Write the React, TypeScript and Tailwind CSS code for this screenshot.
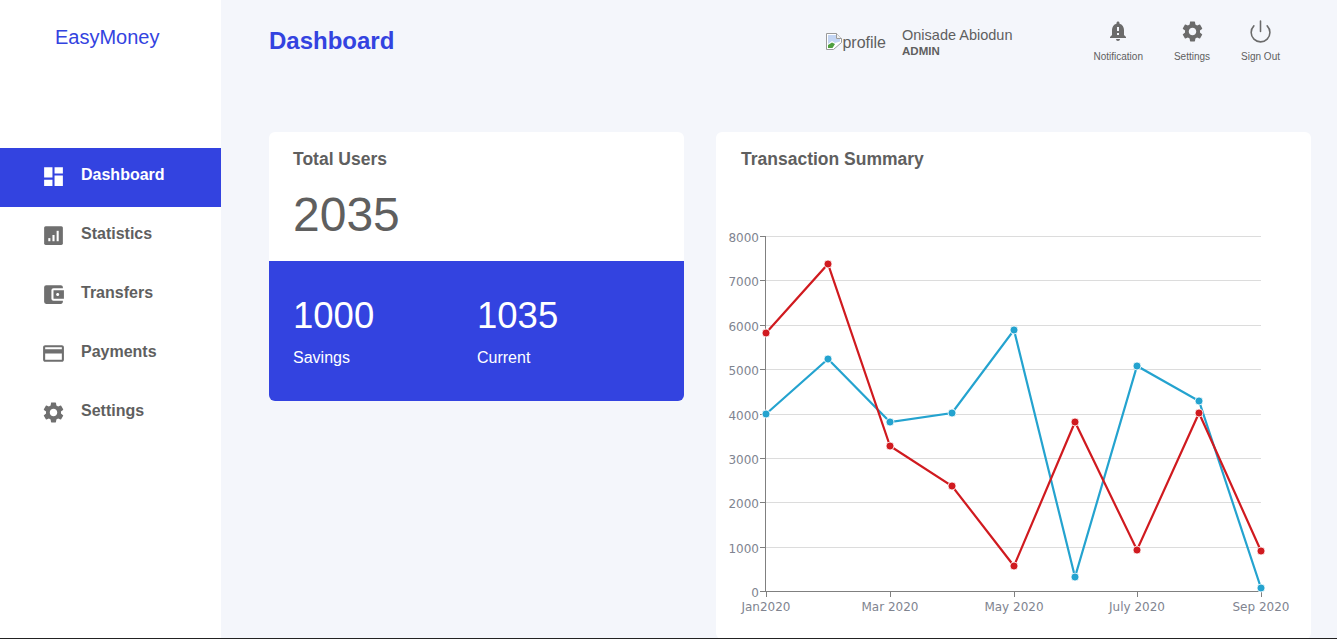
import React from 'react';
import {
  MdDashboard,
  MdAccountBalanceWallet,
  MdCreditCard,
  MdSettings,
  MdNotificationImportant,
} from 'react-icons/md';
import { Power } from 'lucide-react';

const StatsIcon = ({ size, className }: { size: number; className?: string }) => (
  <svg width={size} height={size} viewBox="0 0 24 24" className={className}>
    <rect x={3} y={3} width={18} height={18} rx={1.5} fill="currentColor" />
    <rect x={7} y={14.5} width={2} height={3} fill="#ffffff" />
    <rect x={11} y={11.5} width={2} height={6} fill="#ffffff" />
    <rect x={15} y={7.5} width={2} height={10} fill="#ffffff" />
  </svg>
);

const navItems = [
  { label: 'Dashboard', icon: MdDashboard, active: true },
  { label: 'Statistics', icon: StatsIcon, active: false },
  { label: 'Transfers', icon: MdAccountBalanceWallet, active: false },
  { label: 'Payments', icon: MdCreditCard, active: false },
  { label: 'Settings', icon: MdSettings, active: false },
];

const xs = [766, 828, 890, 952, 1014, 1075, 1137, 1199, 1261];
const red = [333, 264, 446, 486, 566, 422, 550, 413, 551];
const blue = [414, 359, 422, 413, 330, 577, 366, 401, 588];
const yTicks = [
  { label: '8000', y: 236.5 },
  { label: '7000', y: 280.5 },
  { label: '6000', y: 325.5 },
  { label: '5000', y: 369.5 },
  { label: '4000', y: 414.5 },
  { label: '3000', y: 458.5 },
  { label: '2000', y: 502.5 },
  { label: '1000', y: 547.5 },
  { label: '0', y: 591.5 },
];
const xTicks = [
  { label: 'Jan2020', x: 766 },
  { label: 'Mar 2020', x: 890 },
  { label: 'May 2020', x: 1014 },
  { label: 'July 2020', x: 1137 },
  { label: 'Sep 2020', x: 1261 },
];

// chart card starts at page x 716, y 132
const ox = 716;
const oy = 132;

const Series = ({ values, color }: { values: number[]; color: string }) => (
  <g>
    <polyline
      points={values.map((v, i) => `${xs[i] - ox},${v - oy}`).join(' ')}
      fill="none"
      stroke={color}
      strokeWidth={2.2}
    />
    {values.map((v, i) => (
      <circle key={i} cx={xs[i] - ox} cy={v - oy} r={4} fill={color} stroke="#ffffff" strokeWidth={0.8} />
    ))}
  </g>
);

const Chart = () => (
  <svg width={595} height={506} className="block absolute left-0 top-0" style={{ fontFamily: '"DejaVu Sans", sans-serif' }}>
    {yTicks.map((t) => (
      <g key={t.label}>
        {t.label !== '0' && <line x1={766 - ox} x2={1261 - ox} y1={t.y - oy} y2={t.y - oy} stroke="#dcdcdc" strokeWidth={1} />}
        <line x1={760 - ox} x2={766 - ox} y1={t.y - oy} y2={t.y - oy} stroke="#808080" strokeWidth={1} />
        <text x={759 - ox} y={t.y - oy + 5} textAnchor="end" fontSize={12} fill="#808490">
          {t.label}
        </text>
      </g>
    ))}
    <line x1={765.5 - ox} x2={765.5 - ox} y1={236 - oy} y2={592 - oy} stroke="#808080" strokeWidth={1} />
    <line x1={765 - ox} x2={1261 - ox} y1={591.5 - oy} y2={591.5 - oy} stroke="#808080" strokeWidth={1} />
    {xTicks.map((t) => (
      <g key={t.label}>
        <line x1={t.x - ox + 0.5} x2={t.x - ox + 0.5} y1={592 - oy} y2={597 - oy} stroke="#808080" strokeWidth={1} />
        <text x={t.x - ox} y={611 - oy} textAnchor="middle" fontSize={12} fill="#808490">
          {t.label}
        </text>
      </g>
    ))}
    <Series values={blue} color="#24a3cf" />
    <Series values={red} color="#d01a1f" />
  </svg>
);

const BrokenImage = () => (
  <svg width={16} height={17} viewBox="0 0 16 17" className="shrink-0 mb-[2px]">
    <path d="M0.5 0.5H10.5L15.5 5.5V9.5L7.5 16.5H0.5Z" fill="#ffffff" stroke="#9a9a9a" />
    <path d="M2 2H10V6H14V8.5L9 10L6 8L2 11Z" fill="#c3d5f3" />
    <path d="M2 15V12L6 9.5L9 11L6.5 15Z" fill="#4f9f3f" />
    <path d="M10.5 0.5V5.5H15.5" fill="#f0f0f0" stroke="#9a9a9a" />
  </svg>
);

const HeaderAction = ({ label, children }: { label: string; children: React.ReactNode }) => (
  <div className="flex flex-col items-center">
    <div className="h-[26px] flex items-center justify-center text-[#6b6b6b]">{children}</div>
    <span className="mt-[6px] text-[10px] leading-[14px] text-[#5f5f5f] whitespace-nowrap">{label}</span>
  </div>
);

export default function App() {
  return (
    <div
      className="h-[639px] w-full overflow-hidden flex border-b border-[#222222] bg-[#f4f6fb] text-[#5f5f5f]"
      style={{ fontFamily: '"Liberation Sans", Arial, sans-serif' }}
    >
      <aside className="w-[221px] shrink-0 bg-white">
        <div className="h-[148px] pt-[24px] pl-[55px] text-[20px] leading-[26px] text-[#3343e0]">EasyMoney</div>
        <nav className="flex flex-col">
          {navItems.map(({ label, icon: Icon, active }) => (
            <div
              key={label}
              className={`h-[59px] flex items-center pl-[41px] gap-[15px] text-[16px] font-bold ${
                active ? 'bg-[#3343e0] text-white' : 'text-[#5f5f5f]'
              }`}
            >
              <Icon size={25} className={`mb-[3px] ${active ? 'text-white' : 'text-[#6f6f6f]'}`} />
              <span className="leading-[20px] mb-[5px]">{label}</span>
            </div>
          ))}
        </nav>
      </aside>

      <main className="flex-1 min-w-0 pl-[48px] pr-[26px]">
        <header className="h-[132px] flex items-start">
          <h1 className="mt-[25px] text-[24px] leading-[32px] font-bold text-[#3343e0]">Dashboard</h1>
          <div className="ml-auto mt-[27px] flex items-start">
            <div className="flex items-end h-[24px] mt-[1px]">
              <BrokenImage />
              <span className="text-[16px] leading-[18px]">profile</span>
            </div>
            <div className="ml-[16px]">
              <div className="text-[14.5px] leading-[16px]">Onisade Abiodun</div>
              <div className="text-[11.5px] leading-[16px] font-bold">ADMIN</div>
            </div>
          </div>
          <div className="ml-[81px] mr-[31px] mt-[18px] flex items-start gap-[31px]">
            <HeaderAction label="Notification">
              <MdNotificationImportant size={24} />
            </HeaderAction>
            <HeaderAction label="Settings">
              <MdSettings size={25} />
            </HeaderAction>
            <HeaderAction label="Sign Out">
              <Power size={25} strokeWidth={1.5} />
            </HeaderAction>
          </div>
        </header>

        <div className="flex items-start gap-[32px]">
          <section className="w-[415px] shrink-0 rounded-[6px] overflow-hidden bg-white">
            <div className="h-[129px] pl-[24px] pt-[15px]">
              <h2 className="text-[17.5px] leading-[24px] font-bold">Total Users</h2>
              <div className="mt-[18px] text-[48px] leading-[52px]">2035</div>
            </div>
            <div className="h-[140px] bg-[#3343e0] text-white pl-[24px] pt-[33px] flex">
              <div className="w-[184px]">
                <div className="text-[36.5px] leading-[44px]">1000</div>
                <div className="mt-[10px] text-[16px] leading-[20px]">Savings</div>
              </div>
              <div>
                <div className="text-[36.5px] leading-[44px]">1035</div>
                <div className="mt-[10px] text-[16px] leading-[20px]">Current</div>
              </div>
            </div>
          </section>

          <section className="relative flex-1 h-[507px] rounded-[6px] bg-white">
            <Chart />
            <h2 className="relative pl-[25px] pt-[15px] text-[17.5px] leading-[24px] font-bold">Transaction Summary</h2>
          </section>
        </div>
      </main>
    </div>
  );
}
